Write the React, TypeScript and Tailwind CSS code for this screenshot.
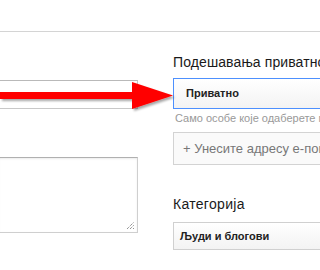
import React from "react";

export default function App() {
  return (
    <div className="relative h-[270px] w-[320px] overflow-hidden bg-white font-['Liberation_Sans',Arial,sans-serif]">
      <div className="h-[32px] border-b border-[#d4d4d4]" />

      <div className="flex">
        {/* Left column: title + description */}
        <div className="ml-[-2px] w-[140px] shrink-0">
          <div className="mt-[48px] h-[29px] border border-[#c8c8c8] border-t-[#b9b9b9] bg-white" />
          <div className="relative mt-[48px] h-[76px] border border-[#cfcfcf] border-t-[#b0b0b0] bg-white shadow-[inset_0_1px_2px_rgba(0,0,0,0.08)]">
            <svg className="absolute bottom-[2px] right-[2px]" width="9" height="9" viewBox="0 0 9 9">
              <path d="M1 8 L8 1 M4 8 L8 4 M7 8 L8 7" stroke="#666" strokeWidth="1" strokeDasharray="1 1" />
            </svg>
          </div>
        </div>

        {/* Right column: privacy + category */}
        <div className="ml-[35px] w-[200px] shrink-0">
          <div className="mt-[22px] h-[16px] text-[14px] leading-[16px] tracking-[0.1px] whitespace-nowrap text-[#1a1a1a]">
            Подешавања приватности
          </div>
          <div className="mt-[8px] flex h-[31px] items-center border border-[#4d90fe] bg-gradient-to-b from-white to-[#f3f3f3] pl-[12px] text-[11px] font-bold text-[#222]">
            Приватно
          </div>
          <div className="mt-[2px] h-[14px] pl-[2px] text-[11px] leading-[14px] whitespace-nowrap text-[#999]">
            Само особе које одаберете могу да виде
          </div>
          <div className="mt-[7px] flex h-[33px] items-center border border-[#d3d3d3] bg-[#fafafa] pl-[9px] text-[13px] whitespace-nowrap text-[#777]">
            + Унесите адресу е-поште
          </div>
          <div className="mt-[31px] h-[16px] text-[14px] leading-[16px] tracking-[0.3px] text-[#1a1a1a]">Категорија</div>
          <div className="mt-[10px] flex h-[28px] items-center border border-[#d0d0d0] bg-gradient-to-b from-white to-[#f3f3f3] pl-[6px] text-[11px] font-bold text-[#222]">
            Људи и блогови
          </div>
        </div>
      </div>

      {/* Red annotation arrow */}
      <svg className="absolute left-0 top-[80px]" width="180" height="34" viewBox="0 0 180 34">
        <defs>
          <filter id="sh" x="-10%" y="-30%" width="130%" height="180%">
            <feDropShadow dx="2" dy="2" stdDeviation="1" floodColor="#000" floodOpacity="0.35" />
          </filter>
        </defs>
        <g filter="url(#sh)">
          <rect x="0" y="12" width="134" height="7" fill="#ff0000" />
          <polygon points="132,2 173,15.5 132,29" fill="#ff0000" />
        </g>
      </svg>
    </div>
  );
}
